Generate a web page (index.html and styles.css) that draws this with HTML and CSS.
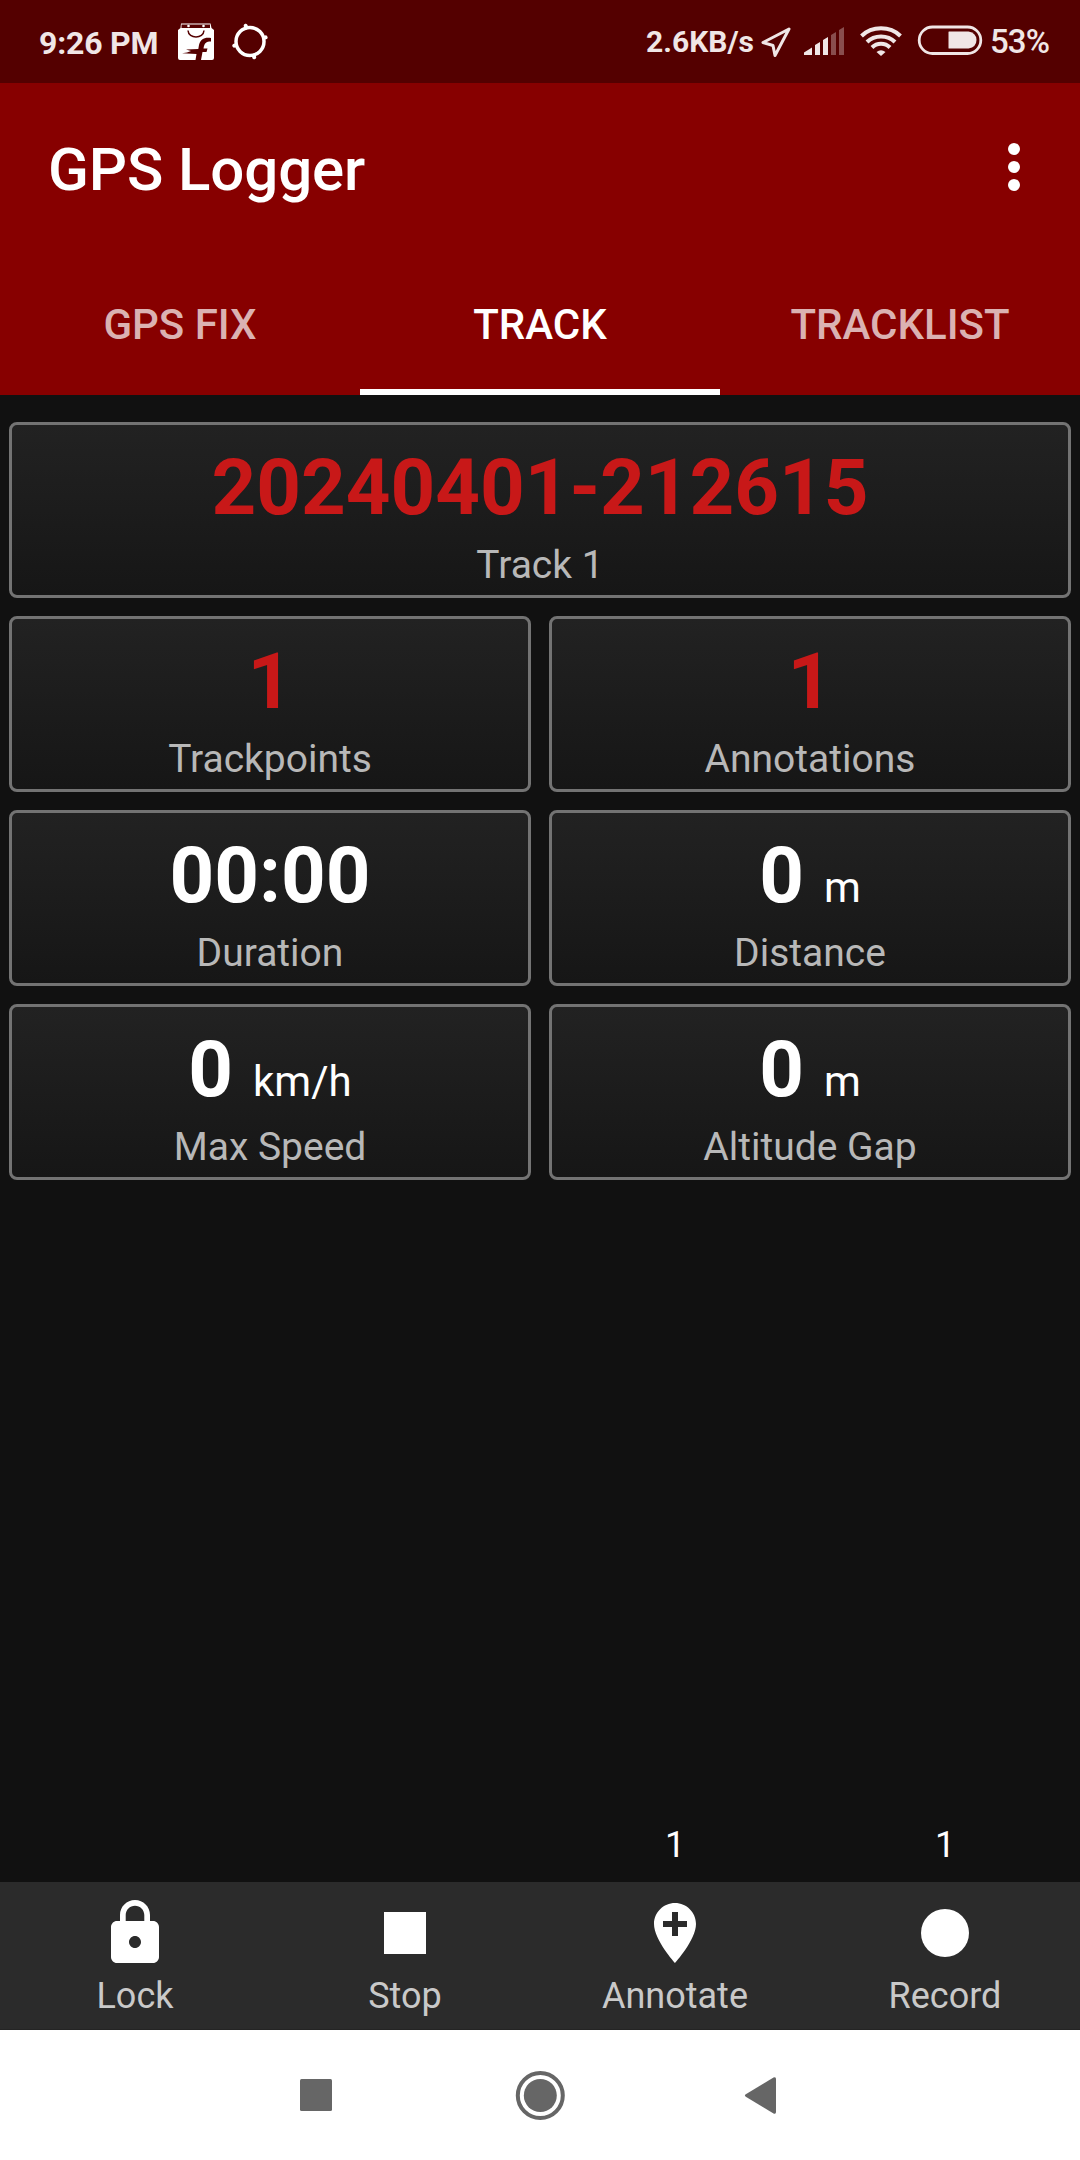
FILE: index.html
```html
<!DOCTYPE html>
<html lang="en">
<head>
<meta charset="utf-8">
<title>GPS Logger</title>
<link rel="stylesheet" href="styles.css">
</head>
<body>
<div class="screen">
  <div class="status-bar">
    <span class="clock">9:26 PM</span>
    <svg class="icon-bag" width="38" height="38" viewBox="0 0 38 38">
      <path d="M4 .5H33.500L34.500 5 37 7V35q0 2-2 2H3q-2 0-2-2V7L3.500 5Z" fill="#fff"/>
      <path d="M4.500 1.500H33V5H4.500Z" fill="#540000"/>
      <circle cx="11.500" cy="3" r="1.300" fill="#fff"/><circle cx="26.500" cy="3" r="1.300" fill="#fff"/>
      <path d="M11 7.500C11.500 16 26.500 16 27 7.500" fill="none" stroke="#540000" stroke-width="1.500"/>
      <path d="M34 15C27.500 14 23.500 16 22 22L21.300 26 9 26.500 14 28 10 29.500 5 30.200 19.500 31 18.500 37H24L25.500 29H29.500L30.500 25.500H26.500C27.500 20 29 18.500 34 18.500Z" fill="#540000"/>
    </svg>
    <svg class="icon-target" width="38" height="38" viewBox="0 0 38 38" fill="none" stroke="#fff">
      <circle cx="19" cy="18.500" r="14" stroke-width="3.500"/>
      <path d="M15.200 4.500 14.700 2.700M33 14.800 34.600 14.400M22.700 32.500 23.200 34.300M5 22.200 3.300 22.700" stroke-width="4" stroke-linecap="round"/>
    </svg>
    <span class="net-speed">2.6KB/s</span>
    <svg class="icon-location" width="32" height="32" viewBox="0 0 32 32" fill="none" stroke="#f0e6e6" stroke-width="3" stroke-linejoin="round">
      <path d="M29 3 3 16.500 13 19.500 15 29.500Z"/>
    </svg>
    <svg class="icon-signal" width="42" height="30" viewBox="0 0 42 30" fill="#f0e6e6">
      <path d="M1 29V26.500L9 21.500V29ZM12 29V19L17 16V29ZM20 29V14L25 11V29Z"/>
      <path d="M28 29V9L33 6V29ZM36 29V4L41 1V29Z" opacity=".34"/>
    </svg>
    <svg class="icon-wifi" width="44" height="32" viewBox="0 0 44 32" fill="none" stroke="#f0e6e6">
      <path d="M2.500 11C13 .8 31 .8 41.500 11" stroke-width="4"/>
      <path d="M8 17C15.500 9.500 28.500 9.500 36 17" stroke-width="4"/>
      <path d="M13 22.500C18 17.500 26 17.500 31 22.500" stroke-width="4"/>
      <path d="M17.500 27Q22 23.500 26.500 27L22 31Z" fill="#f0e6e6" stroke="none"/>
    </svg>
    <svg class="icon-battery" width="66" height="30" viewBox="0 0 66 30">
      <rect x="2.200" y="2" width="61.600" height="26.500" rx="13.250" fill="none" stroke="#f0e6e6" stroke-width="2.800"/>
      <path d="M32 6.500H51.500Q59.500 8 59.500 15T51.500 23.500H32Q31.500 23.500 31.500 23V7Q31.500 6.500 32 6.500Z" fill="#f0e6e6"/>
    </svg>
    <span class="battery-level">53%</span>
  </div>

  <header class="app-bar">
    <div class="toolbar">
      <h1 class="title">GPS Logger</h1>
      <svg class="overflow" width="12" height="48" viewBox="0 0 12 48" fill="#fff">
        <circle cx="6" cy="6" r="6"/><circle cx="6" cy="24" r="6"/><circle cx="6" cy="42" r="6"/>
      </svg>
    </div>
    <nav class="tabs">
      <div class="tab">GPS FIX</div>
      <div class="tab active">TRACK</div>
      <div class="tab">TRACKLIST</div>
    </nav>
  </header>

  <main class="cards">
    <section class="card wide"><div class="value red">20240401-212615</div><div class="label">Track 1</div></section>
    <section class="card"><div class="value red">1</div><div class="label">Trackpoints</div></section>
    <section class="card"><div class="value red">1</div><div class="label">Annotations</div></section>
    <section class="card"><div class="value">00:00</div><div class="label">Duration</div></section>
    <section class="card"><div class="value">0<span class="unit">m</span></div><div class="label">Distance</div></section>
    <section class="card"><div class="value">0<span class="unit">km/h</span></div><div class="label">Max Speed</div></section>
    <section class="card"><div class="value">0<span class="unit">m</span></div><div class="label">Altitude Gap</div></section>
  </main>

  <div class="counts"><span></span><span></span><span>1</span><span>1</span></div>

  <div class="actions">
    <div class="action">
      <svg width="72" height="72" viewBox="0 0 24 24" fill="#fff"><path d="M18 8h-1V6c0-2.760-2.240-5-5-5S7 3.240 7 6v2H6c-1.100 0-2 .9-2 2v10c0 1.100.9 2 2 2h12c1.100 0 2-.9 2-2V10c0-1.100-.9-2-2-2zm-6 9c-1.100 0-2-.9-2-2s.9-2 2-2 2 .9 2 2-.9 2-2 2zm3.100-9H8.900V6c0-1.710 1.390-3.100 3.100-3.100s3.100 1.390 3.100 3.100v2z"/></svg>
      <span>Lock</span>
    </div>
    <div class="action">
      <svg width="72" height="72" viewBox="0 0 24 24" fill="#fff"><path d="M5 5h14v14H5z"/></svg>
      <span>Stop</span>
    </div>
    <div class="action">
      <svg width="72" height="72" viewBox="0 0 24 24" fill="#fff"><path d="M12 2C8.140 2 5 5.140 5 9c0 5.250 7 13 7 13s7-7.750 7-13c0-3.860-3.140-7-7-7zm4 8h-3v3h-2v-3H8V8h3V5h2v3h3v2z"/></svg>
      <span>Annotate</span>
    </div>
    <div class="action">
      <svg width="72" height="72" viewBox="0 0 24 24" fill="#fff"><circle cx="12" cy="12" r="8"/></svg>
      <span>Record</span>
    </div>
  </div>

  <div class="nav-bar">
    <svg width="50" height="50" viewBox="0 0 50 50" fill="#666"><rect x="9" y="9" width="32" height="32" rx="1.500"/></svg>
    <svg width="50" height="50" viewBox="0 0 50 50"><circle cx="25.300" cy="25.500" r="22.500" fill="none" stroke="#666" stroke-width="4"/><circle cx="25.300" cy="25.500" r="16.500" fill="#666"/></svg>
    <svg width="50" height="50" viewBox="0 0 50 50" fill="#666"><path d="M6.800 24.300 34.500 7.600Q37 6.500 37 9V42Q37 44.500 34.500 43.400L6.800 26.700Q5 25.500 6.800 24.300Z"/></svg>
  </div>
</div>
</body>
</html>
```

FILE: styles.css
```css
* { box-sizing: border-box; }

body {
  margin: 0;
  background: #111;
  font-family: Roboto, sans-serif;
  color: #fff;
}

.screen {
  width: 1080px;
  height: 2160px;
  display: flex;
  flex-direction: column;
  overflow: hidden;
}

svg { display: block; flex: none; }

/* System status bar */
.status-bar {
  height: 83px;
  flex: none;
  display: flex;
  align-items: flex-start;
  background: #540000;
  color: #f0e6e6;
  white-space: nowrap;
}
.clock {
  width: 119px;
  margin: 23px 0 0 39px;
  font-size: 32px;
  font-weight: 700;
  line-height: 40px;
  letter-spacing: -0.2px;
}
.icon-bag { margin: 23px 0 0 19px; }
.icon-target { margin: 23px 0 0 16px; }
.net-speed {
  margin: 22px 0 0 auto;
  font-size: 30px;
  font-weight: 700;
  line-height: 40px;
}
.icon-location { margin: 26px 0 0 6px; }
.icon-signal { margin: 26px 0 0 11px; }
.icon-wifi { margin: 25px 0 0 14px; }
.icon-battery { margin: 25px 0 0 14px; }
.battery-level {
  width: 60px;
  margin: 21px 30px 0 7px;
  font-size: 33px;
  font-weight: 500;
  line-height: 42px;
  letter-spacing: -0.9px;
}

/* App bar */
.app-bar {
  height: 312px;
  flex: none;
  background: #870000;
}
.toolbar {
  height: 168px;
  display: flex;
  align-items: center;
  justify-content: space-between;
  padding: 0 60px 0 48px;
}
.title {
  margin: 5px 0 0;
  font-size: 60px;
  font-weight: 500;
  line-height: 72px;
  letter-spacing: -0.1px;
}
.tabs { height: 144px; display: flex; }
.tab {
  flex: 1;
  padding-top: 7px;
  border-bottom: 6px solid transparent;
  font-size: 42px;
  font-weight: 500;
  line-height: 134px;
  text-align: center;
  color: #dbb2b2;
}
.tab.active { color: #fff; border-color: #fff; }

/* Track statistics */
.cards {
  padding: 27px 9px 0;
  display: grid;
  grid-template-columns: 1fr 1fr;
  grid-auto-rows: 176px;
  gap: 18px;
}
.card {
  padding-top: 17px;
  border: 3px solid #737373;
  border-radius: 8px;
  background: linear-gradient(#222, #161616);
}
.wide { grid-column: 1 / -1; }
.value {
  height: 92px;
  display: flex;
  justify-content: center;
  align-items: baseline;
  gap: 20px;
  font-size: 78px;
  font-weight: 700;
  line-height: 92px;
}
.red { color: #c81818; }
.unit { font-size: 42px; font-weight: 400; line-height: 48px; }
.label {
  margin-top: 8px;
  font-size: 39px;
  line-height: 46px;
  text-align: center;
  color: #b8b8b8;
}

/* Pending counters above the action bar */
.counts {
  margin-top: auto;
  padding-bottom: 15px;
  display: grid;
  grid-template-columns: repeat(4, 1fr);
  font-size: 36px;
  line-height: 44px;
  text-align: center;
}

/* Action bar */
.actions {
  height: 148px;
  flex: none;
  display: grid;
  grid-template-columns: repeat(4, 1fr);
  padding-top: 15px;
  background: #2b2b2b;
  border-bottom: 1px solid #242424;
}
.action {
  display: flex;
  flex-direction: column;
  align-items: center;
  font-size: 36px;
  line-height: 44px;
  color: #c9c9c9;
}
.action span { margin-top: 5px; }

/* System navigation */
.nav-bar {
  height: 130px;
  flex: none;
  display: flex;
  justify-content: center;
  gap: 174px;
  padding: 40px 0 0;
  background: #fff;
}
```
